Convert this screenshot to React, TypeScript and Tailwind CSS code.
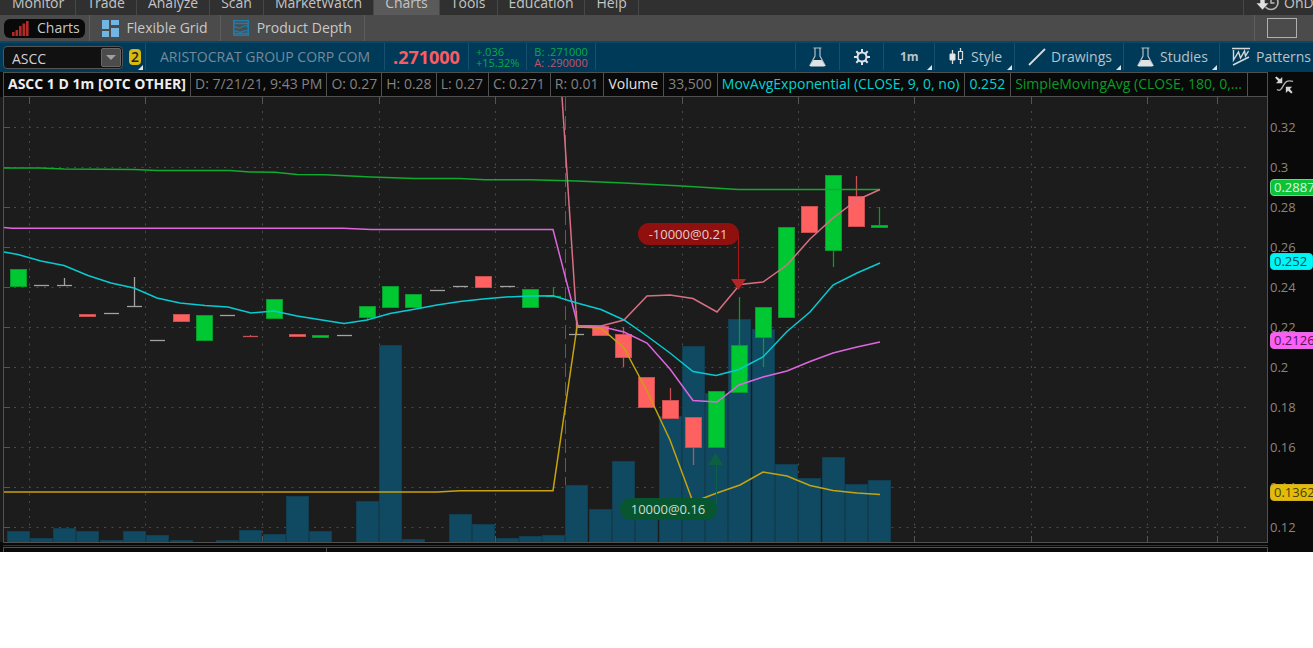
import type { ReactNode } from 'react';

type Kind = 'up' | 'down' | 'flat';

interface Bar {
  kind: Kind;
  top: number;
  bottom: number;
  high?: number;
  low?: number;
  volume?: number;
}

const menuItems = ['Monitor', 'Trade', 'Analyze', 'Scan', 'MarketWatch', 'Charts', 'Tools', 'Education', 'Help'];

// y values are chart pixels, volume is the top edge of the volume column
const bars: Bar[] = [
  { kind: 'up', top: 269, bottom: 286, volume: 531 },
  { kind: 'flat', top: 286, bottom: 286, volume: 538 },
  { kind: 'flat', top: 286, bottom: 286, high: 278, volume: 528 },
  { kind: 'down', top: 314, bottom: 316, volume: 531 },
  { kind: 'flat', top: 314, bottom: 314, volume: 540 },
  { kind: 'flat', top: 307, bottom: 307, high: 277, volume: 531 },
  { kind: 'flat', top: 341, bottom: 341, volume: 535 },
  { kind: 'down', top: 314, bottom: 321, volume: 540 },
  { kind: 'up', top: 315, bottom: 340 },
  { kind: 'flat', top: 316, bottom: 316, volume: 540 },
  { kind: 'down', top: 336, bottom: 337, high: 335, volume: 530 },
  { kind: 'up', top: 299, bottom: 318, volume: 534 },
  { kind: 'down', top: 334, bottom: 336, volume: 496 },
  { kind: 'up', top: 335, bottom: 337, volume: 531 },
  { kind: 'flat', top: 336, bottom: 336 },
  { kind: 'up', top: 306, bottom: 317, low: 320, volume: 501 },
  { kind: 'up', top: 286, bottom: 307, volume: 345 },
  { kind: 'up', top: 294, bottom: 307, volume: 539 },
  { kind: 'flat', top: 291, bottom: 291 },
  { kind: 'flat', top: 287, bottom: 287, volume: 514 },
  { kind: 'down', top: 276, bottom: 287, volume: 524 },
  { kind: 'flat', top: 287, bottom: 287, volume: 538 },
  { kind: 'up', top: 289, bottom: 307, volume: 536 },
  { kind: 'up', top: 296, bottom: 297, high: 287, volume: 535 },
  { kind: 'flat', top: 335, bottom: 335, high: 311, volume: 485 },
  { kind: 'down', top: 326, bottom: 335, volume: 509 },
  { kind: 'down', top: 334, bottom: 357, high: 327, low: 367, volume: 461 },
  { kind: 'down', top: 377, bottom: 407, volume: 500 },
  { kind: 'down', top: 400, bottom: 418, high: 388, volume: 416 },
  { kind: 'down', top: 417, bottom: 447, low: 465, volume: 346 },
  { kind: 'up', top: 391, bottom: 447, volume: 393 },
  { kind: 'up', top: 345, bottom: 392, high: 297, volume: 319 },
  { kind: 'up', top: 307, bottom: 337, low: 367, volume: 329 },
  { kind: 'up', top: 227, bottom: 317, volume: 464 },
  { kind: 'down', top: 206, bottom: 232, volume: 478 },
  { kind: 'up', top: 175, bottom: 250, low: 267, volume: 457 },
  { kind: 'down', top: 196, bottom: 226, high: 176, volume: 484 },
  { kind: 'up', top: 225, bottom: 227, high: 207, volume: 480 },
];

const lines = [
  { color: '#0fab2e', points: '4,168 40,168 64,169 134,169.5 157,170.5 230,170.5 250,172 275,172.3 297,174.5 325,174.8 371,177 415,178.5 460,178.5 485,179.7 530,179.8 577,181 624,183 682,186 738,189.5 880,189.5' },
  { color: '#dd66e0', points: '4,227.5 12,228.3 343,228.3 371,229.5 553,229.5 578,326 601,326.5 624,332 647,343 670,369 693,400.5 717,402 739,385 763,377 787,371 810,361.5 833,353 857,347 880,342' },
  { color: '#c6a30f', points: '4,492 437,492 460,490.7 553,490.7 577,327 601,328 624,348 647,391 670,440 693,502 717,493 740,485 763,472 787,476 810,485.5 833,490.5 857,493 880,494.5' },
  { color: '#d86f83', points: '562,97 577,325.5 601,326 624,320 647,296 670,295 693,298.5 717,312 740,284.5 763,282 787,265 810,239 833,218 857,200 880,189.5' },
  { color: '#08cbd0', points: '4,252 18,254.5 41,261 64,265.5 88,275.5 111,283 134,288 157,298 180,303 205,305.5 228,307 251,313 274,311 297,316 344,323.5 367,320 390,313.5 413,309.5 437,305 460,301.5 483,299 506,297 530,296 553,295.8 577,303 601,309.5 624,320 647,336 670,353 693,371.5 716,375.5 739,369.5 763,357 787,331.5 810,312 833,285 857,273 880,263' },
];

const gridX = [29, 145, 262, 379, 495, 682, 798, 914, 1031, 1147, 1217];
const gridY = [127, 167, 207, 247, 287, 327, 367, 407, 447, 487, 527];
const priceTicks = ['0.32', '0.3', '0.28', '0.26', '0.24', '0.22', '0.2', '0.18', '0.16', '0.14', '0.12'];

const fills: Record<Kind, string> = { up: '#00c832', down: '#ff6060', flat: '#9a9a9a' };
const strokes: Record<Kind, string> = { up: '#0a9a2c', down: '#c94f50', flat: '#a2a2a2' };

const barX = (i: number) => Math.floor(18 + i * 23.29);

function MenuBar() {
  return (
    <nav className="flex h-[15px] items-end overflow-hidden bg-[#303030] pl-px text-sm leading-5 text-[#c4c4c4]">
      {menuItems.map((item) => (
        <button
          key={item}
          className={
            item === 'Charts'
              ? 'shrink-0 border-r border-[#474747] bg-[#5a5a5a] px-[11px] pb-0.5'
              : 'shrink-0 border-r border-[#474747] px-[11px] pb-0.5'
          }
        >
          {item}
        </button>
      ))}
      <button className="ml-auto flex w-[70px] shrink-0 items-end gap-1 overflow-hidden border-l border-[#474747] pb-0.5 pl-3 whitespace-nowrap">
        <svg width="24" height="20" viewBox="0 0 24 20" className="shrink-0">
          <circle cx="15" cy="9.500" r="7" fill="none" stroke="#b8b8b8" strokeWidth="1.6" />
          <path d="M15 5.500v4.500h3.500" fill="none" stroke="#b8b8b8" strokeWidth="1.500" />
          <path d="M4 2h5v8h4l-6.500 7L0 10h4z" fill="#e0e0e0" stroke="#303030" strokeWidth=".6" />
        </svg>
        OnDemand
      </button>
    </nav>
  );
}

function ViewTabs() {
  return (
    <div className="flex h-[26px] items-center bg-[#4b4b4b] text-sm leading-5 text-[#c8c8c8]">
      <div className="flex h-full items-center border-r border-[#5e5e5e] px-1">
        <button className="flex h-[19px] items-center gap-2 rounded-md bg-[#090909] pr-[5px] pl-2">
          <svg width="17" height="17" viewBox="0 0 17 17" fill="#b02a26">
            <path d="M0 12h2.600v4H0zM3.500 10h2.600v6H3.500zM7 6h2.600v10H7zM10.500 3.500h2.600V16h-2.600zM14 1h2.600v15H14z" />
          </svg>
          Charts
        </button>
      </div>
      <button className="flex h-full items-center gap-2 border-r border-[#5e5e5e] px-3">
        <svg width="17" height="17" viewBox="0 0 17 17" fill="#72b5e3">
          <path d="M0 0h7v9H0zM9 0h8v5H9zM0 11h7v6H0zM9 8h8v9H9z" />
        </svg>
        Flexible Grid
      </button>
      <button className="flex h-full items-center gap-2 border-r border-[#5e5e5e] px-3">
        <svg width="16" height="16" viewBox="0 0 16 16" fill="none" stroke="#1c7cae">
          <path d="M.8.8h14.400v14.400H.8z" strokeWidth="1.600" />
          <path d="M1 3.500h14M1 8c2-3 4 1 6 0s3-3 8-2M1 12c3-3 4 1 7 0s4-2 7-1M1 13.500h14" strokeWidth="1.300" />
        </svg>
        Product Depth
      </button>
      <div className="ml-auto flex h-full w-[59px] items-center border-l border-[#5e5e5e] pl-3">
        <button aria-label="Layout" className="h-5 w-[30px] border border-[#b0b0b0]" />
      </div>
    </div>
  );
}

function Flask() {
  return (
    <svg width="17" height="20" viewBox="0 0 17 20" className="shrink-0">
      <path d="M4.500 1h8M6 1v8L1 18.500h15L11 9V1" fill="none" stroke="#b4bec4" strokeWidth="1.200" />
      <path d="M4.500 13h8l3.500 5.500q0 1-1 1H2q-1 0-1-1z" fill="#e0e3e5" />
    </svg>
  );
}

function Corner() {
  return (
    <svg width="5" height="5" viewBox="0 0 5 5" className="absolute right-[2px] bottom-0">
      <path d="M5 0v5H0z" fill="#dfe3e6" />
    </svg>
  );
}

function Tool({ className, label, menu, children }: { className: string; label?: string; menu?: boolean; children: ReactNode }) {
  return (
    <button aria-label={label} className={`relative flex h-[27px] shrink-0 items-center border-l border-[#17506f] ${className}`}>
      {children}
      {menu && <Corner />}
    </button>
  );
}

function Toolbar() {
  return (
    <div className="flex h-[31px] items-center overflow-hidden border-t-2 border-[#0b4666] bg-[#003a59] pb-0.5 pl-[3px] text-sm leading-5 whitespace-nowrap text-[#b9c2c8]">
      <div className="mt-0.5 flex h-[23px] w-[120px] shrink-0 rounded-sm border border-[#555] bg-[#111] p-px">
        <input
          aria-label="Symbol"
          defaultValue="ASCC"
          className="w-0 flex-1 bg-transparent pt-0.5 pl-[7px] text-sm leading-4 text-[#d0d0d0] outline-none"
        />
        <button aria-label="Symbol list" className="flex w-5 items-center justify-center rounded-xs border border-[#666] bg-[#4b4b4b]">
          <svg width="10" height="5" viewBox="0 0 10 5"><path d="M0 0h10L5 5z" fill="#a0a0a0" /></svg>
        </button>
      </div>
      <button className="relative flex h-[27px] w-[23px] shrink-0 items-center border-r border-[#17506f] pl-[6px]">
        <span className="flex h-4 w-3 items-center justify-center rounded-sm bg-[#d8b90e] text-sm font-semibold text-[#222]">2</span>
        <Corner />
      </button>
      <span className="flex h-[27px] shrink-0 items-center border-r border-[#17506f] px-[14px] text-[#748a98]">ARISTOCRAT GROUP CORP COM</span>
      <span className="flex h-[27px] shrink-0 items-center border-r border-[#17506f] px-2 text-[18px] font-bold text-[#fb5c63]">.271000</span>
      <span className="flex h-[27px] shrink-0 flex-col justify-center border-r border-[#17506f] px-[7px] text-[11px] leading-[11px] text-[#0ba948]">
        <span>+.036</span>
        <span>+15.32%</span>
      </span>
      <span className="flex h-[27px] shrink-0 flex-col justify-center border-r border-[#17506f] px-[7px] text-[11px] leading-[11px] text-[#0ba948]">
        <span>B: .271000</span>
        <span className="text-[#c25468]">A: .290000</span>
      </span>
      <div className="ml-auto flex shrink-0">
        <Tool className="w-11 justify-center" label="Edit studies"><Flask /></Tool>
        <Tool className="w-11 justify-center" label="Settings">
          <svg width="18" height="18" viewBox="0 0 18 18" fill="none" stroke="#e0e3e5">
            <circle cx="9" cy="9" r="4.500" strokeWidth="2" />
            <path d="M9 1v3M9 14v3M1 9h3M14 9h3M3.300 3.300l2.200 2.200M12.500 12.500l2.200 2.200M3.300 14.700l2.200-2.200M12.500 5.500l2.200-2.200" strokeWidth="2" />
          </svg>
        </Tool>
        <Tool className="w-[51px] pl-4 text-xs font-bold" menu>1m</Tool>
        <Tool className="w-20 gap-[7px] pl-[14px]" menu>
          <svg width="15" height="17" viewBox="0 0 15 17" fill="none" stroke="#d9dde0">
            <path d="M3.500 2v14M11.500 0v3M11.500 12v4" strokeWidth="1.300" />
            <path d="M1 6h5v6H1z" fill="#e6e8ea" />
            <path d="M9.500 3.500h4v8h-4z" strokeWidth="1.200" />
          </svg>
          Style
        </Tool>
        <Tool className="w-[109px] gap-[5px] pl-[13px]" menu>
          <svg width="18" height="18" viewBox="0 0 18 18"><path d="M1 17L17 1" stroke="#d9dde0" strokeWidth="1.800" /></svg>
          Drawings
        </Tool>
        <Tool className="w-24 gap-[6px] pl-[13px]" menu><Flask />Studies</Tool>
        <Tool className="w-[94px] gap-[6px] overflow-hidden pl-3">
          <svg width="18" height="19" viewBox="0 0 18 19" fill="none" stroke="#d4d8da" className="shrink-0">
            <path d="M0 1.500h18M1 18L17 10" strokeWidth="1.600" />
            <path d="M1.500 3v10l5-8 2 6 4-7 1 5 3-5" strokeWidth="1.400" />
          </svg>
          Patterns
        </Tool>
      </div>
    </div>
  );
}

function StudyRow() {
  const tight = 'flex shrink-0 items-center border-r border-[#505050] px-1 pb-0.5';
  const cell = 'flex shrink-0 items-center border-r border-[#505050] pr-[5px] pl-1 pb-0.5';
  return (
    <div className="flex h-[25px] bg-[#090909] pl-[3px] text-sm leading-5 whitespace-nowrap text-[#828282]">
      <div className="flex min-w-0 flex-1 overflow-hidden border-y border-l border-[#505050]">
        <span className={`${tight} font-bold text-[#eee]`}>ASCC 1 D 1m [OTC OTHER]</span>
        <span className={tight}>D: 7/21/21, 9:43 PM</span>
        <span className={tight}>O: 0.27</span>
        <span className={tight}>H: 0.28</span>
        <span className={cell}>L: 0.27</span>
        <span className={cell}>C: 0.271</span>
        <span className={cell}>R: 0.01</span>
        <span className={`${cell} text-[#e2e2e2]`}>Volume</span>
        <span className={cell}>33,500</span>
        <span className={`${cell} text-[#00d4d4]`}>MovAvgExponential (CLOSE, 9, 0, no)</span>
        <span className={`${cell} text-[#00d4d4]`}>0.252</span>
        <span className={`${cell} text-[#0b9c27]`}>SimpleMovingAvg (CLOSE, 180, 0,...</span>
      </div>
      <button aria-label="Collapse" className="flex w-[46px] shrink-0 items-center border-l border-[#505050] pl-[7px]">
        <svg width="19" height="18" viewBox="0 0 21 20">
          <path d="M2 15c3 2 5 0 7-4s4-7 11-5" fill="none" stroke="#b0b0b0" strokeWidth="1.500" />
          <path d="M8 1v7H1l2.500-2.500L0 2l1.500-1.500L5.500 3.500zM12 12h7l-2.500 2.500 3 3.500-1.500 1.500-3.500-3L12 19z" fill="#d6d6d6" />
        </svg>
      </button>
    </div>
  );
}

function Candle({ bar, x }: { bar: Bar; x: number }) {
  const { kind, top, bottom, high = top, low = bottom } = bar;
  const thin = bottom - top < 2;
  return (
    <g fill={fills[kind]} stroke={strokes[kind]}>
      {(high < top || low > bottom) && <path d={`M${x + 0.5} ${high}V${low}`} strokeWidth="1.3" />}
      {thin ? (
        <path d={`M${x - 7} ${bottom - 0.5}h15`} strokeWidth="1.3" />
      ) : (
        <rect x={x - 7.5} y={top + 0.5} width="16" height={bottom - top} />
      )}
    </g>
  );
}

function Plot() {
  return (
    <svg height="445" className="block w-full bg-[#1c1c1c]" role="img" aria-label="ASCC price chart">
      <g transform="translate(0 -97)">
        <g stroke="#4a4a4a" strokeDasharray="2 5.5">
          {gridY.map((y) => (
            <line key={y} x1="14" x2="98.5%" y1={y + 0.5} y2={y + 0.5} />
          ))}
          {gridX.map((x) => (
            <line key={x} x1={x + 0.5} x2={x + 0.5} y1="111" y2="537" />
          ))}
        </g>
        <path d="M565.5 97V541" stroke="#5c5c5c" strokeDasharray="14 5" />
        <g stroke="#555">
          {gridY.map((y) => (
            <path key={y} d={`M4 ${y + 0.5}h6`} />
          ))}
          {gridX.map((x) => (
            <path key={x} d={`M${x + 0.5} 97v7M${x + 0.5} 536v6`} />
          ))}
        </g>
        {bars.map((bar, i) =>
          bar.volume ? (
            <rect
              key={i}
              x={barX(i) - 10.5}
              y={bar.volume + 0.5}
              width="22"
              height={542 - bar.volume}
              fill="#0f4c67"
              fillOpacity=".93"
              stroke="#113e51"
            />
          ) : null,
        )}
        {bars.map((bar, i) => (
          <Candle key={i} bar={bar} x={barX(i)} />
        ))}
        {lines.map((line) => (
          <polyline key={line.color} points={line.points} fill="none" stroke={line.color} strokeWidth="1.5" />
        ))}
        <path d="M738.5 234v46" stroke="#a51b1b" />
        <path d="M731 279h15l-7.500 11z" fill="#b32424" />
        <rect x="638" y="223" width="101" height="22" rx="11" fill="#8f100f" />
        <text x="688" y="239" textAnchor="middle" fontSize="13" fill="#e6cccc">-10000@0.21</text>
        <path d="M716.5 464v40" stroke="#0c6048" />
        <path d="M708 465h15l-7.500-12z" fill="#0c6040" />
        <rect x="620" y="498" width="97" height="22" rx="11" fill="#085630" />
        <text x="668" y="514" textAnchor="middle" fontSize="13" fill="#cfdccf">10000@0.16</text>
        <path d="M3.500 97V542" stroke="#505050" />
      </g>
    </svg>
  );
}

function PriceAxis() {
  const badge = 'absolute left-[2px] h-[17px] rounded-sm border px-[3px] leading-[15px]';
  return (
    <div className="relative w-[46px] shrink-0 overflow-hidden border-l border-[#505050] bg-[#090909] pt-[11px] text-[13px] text-[#8b857d]">
      {priceTicks.map((tick) => (
        <div key={tick} className="flex h-10 items-center pl-0.5">{tick}</div>
      ))}
      <span className={`${badge} top-[82px] border-[#62dc7c] bg-[#0cc238] text-[#e0f5e0]`}>0.2887</span>
      <span className={`${badge} top-[156px] border-[#00e6e6] bg-[#00f6f6] pr-[5px] text-[#064a4a]`}>0.252</span>
      <span className={`${badge} top-[235px] border-[#e070e0] bg-[#ff5cf8] text-[#521852]`}>0.2126</span>
      <span className={`${badge} top-[387px] border-[#cfae20] bg-[#e2bc06] text-[#4b3e08]`}>0.1362</span>
    </div>
  );
}

export default function App() {
  return (
    <div className="bg-white font-['Open_Sans','Noto_Sans',sans-serif]">
      <main className="overflow-hidden bg-[#090909]">
        <MenuBar />
        <ViewTabs />
        <Toolbar />
        <StudyRow />
        <div className="flex">
          <div className="min-w-0 flex-1 overflow-hidden">
            <Plot />
          </div>
          <div className="flex h-[445px]">
            <PriceAxis />
          </div>
        </div>
        <div className="mr-[45px] ml-[3px] h-[3px] border-t border-[#505050]" />
        <div className="mr-[45px] ml-[3px] h-[2px] border-t border-[#303030]" />
        <div className="mr-[45px] ml-[3px] flex h-[5px] border-x border-t border-[#505050]">
          <div className="w-[323px] border-r border-[#505050]" />
        </div>
      </main>
    </div>
  );
}
